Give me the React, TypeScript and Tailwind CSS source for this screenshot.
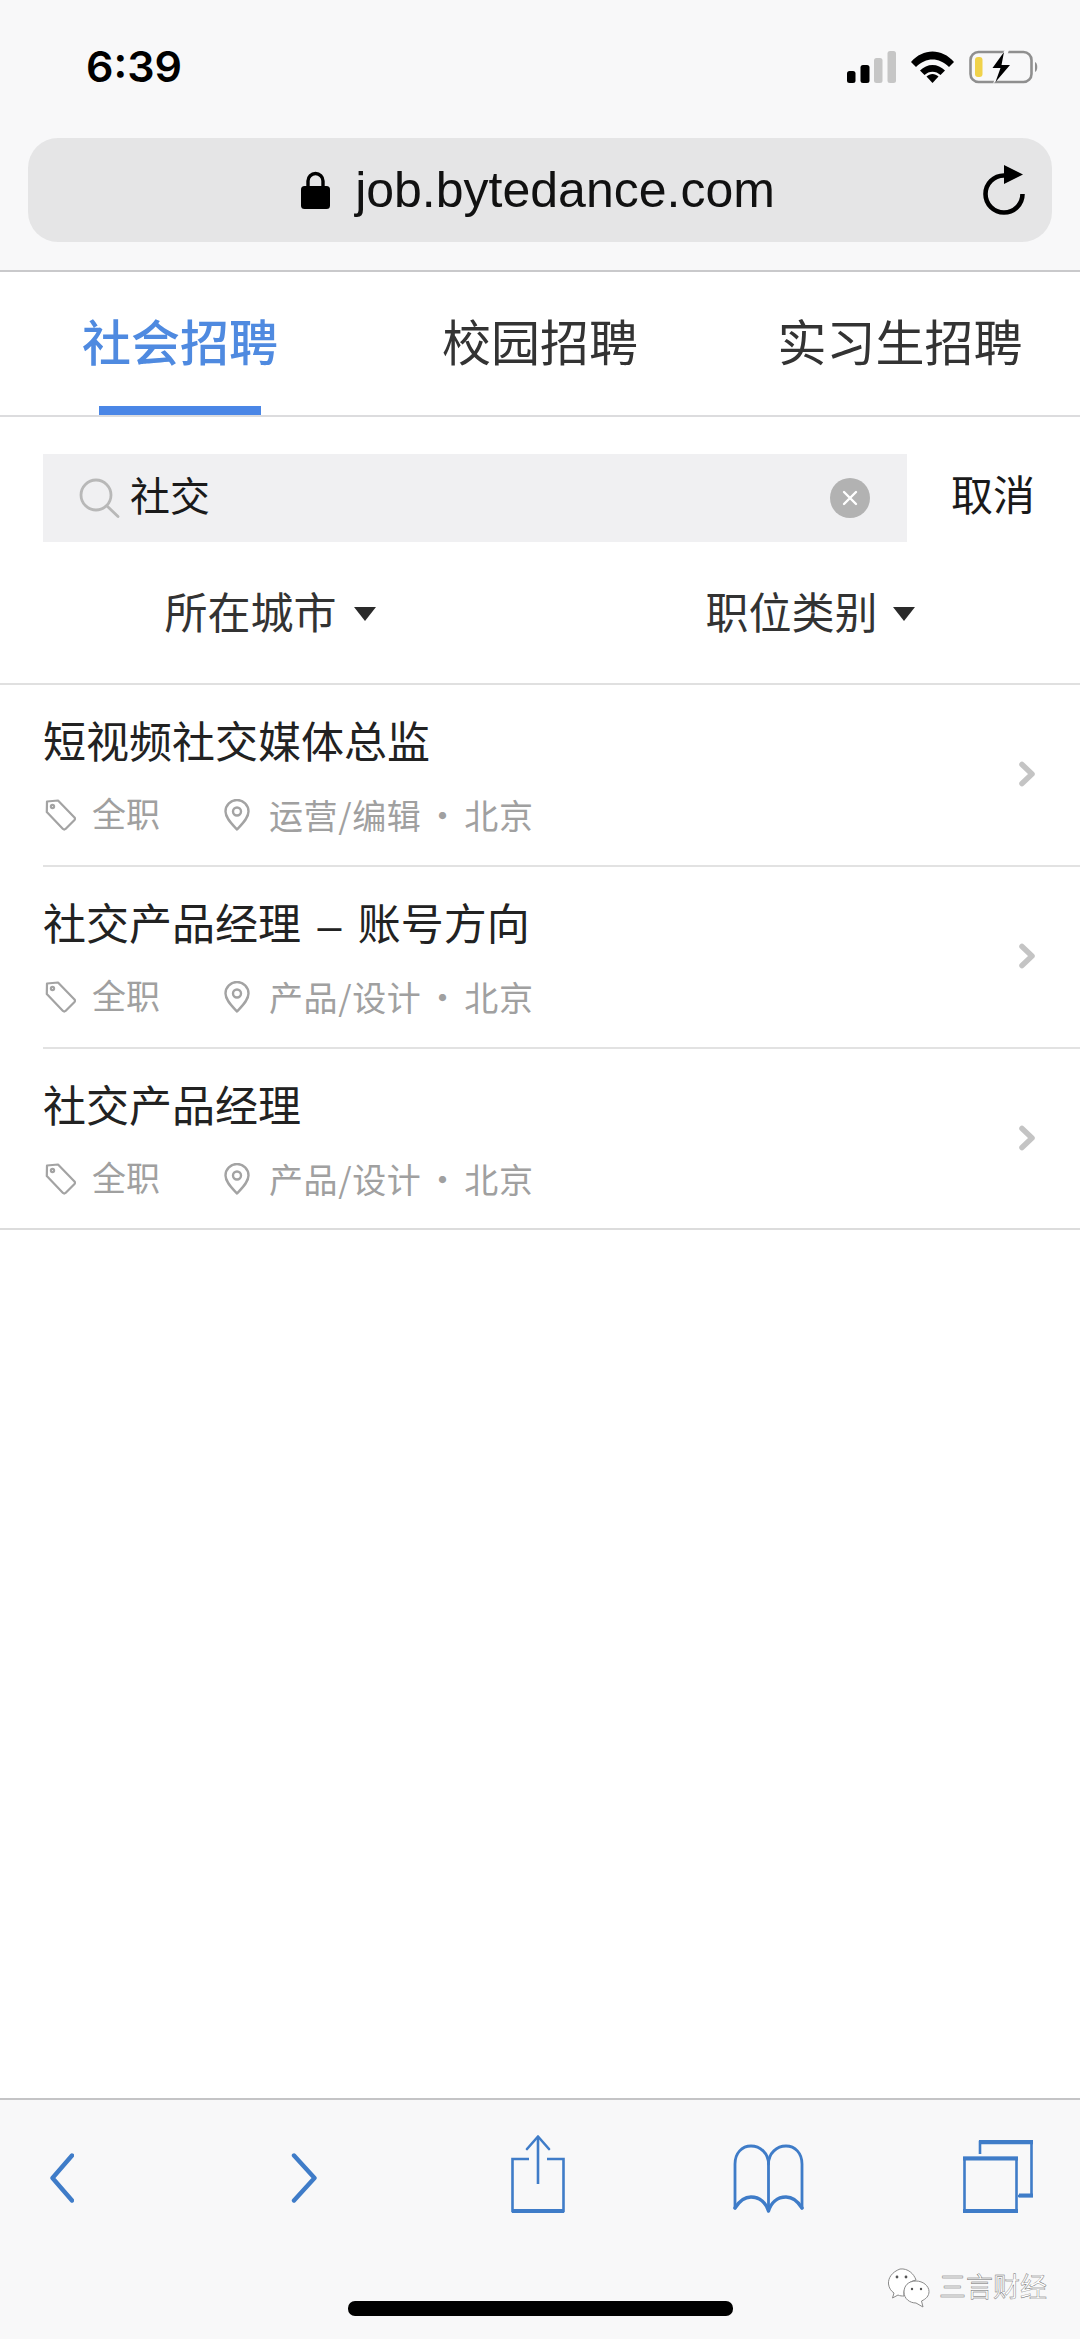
import React from "react";

const BLUE = "#3f7cc8";

function TagIcon() {
  return (
    <svg width="31" height="32" viewBox="0 0 31 32" fill="none" stroke="#a3a3a3" strokeWidth="2.2" strokeLinejoin="round">
      <path d="M2 2.5 L13 1.5 L29.5 18.5 Q30.5 19.8 29.5 21 L20.5 30 Q19.2 31 18 30 L1.8 13 Z" />
      <circle cx="7.5" cy="7.5" r="1.6" />
    </svg>
  );
}

function PinIcon() {
  return (
    <svg width="26" height="32" viewBox="0 0 26 32" fill="none" stroke="#a3a3a3" strokeWidth="2.4">
      <path d="M13 30.5 C8 25 1.5 19 1.5 12.5 A11.5 11.5 0 0 1 24.5 12.5 C24.5 19 18 25 13 30.5 Z" strokeLinejoin="round" />
      <circle cx="13" cy="12.5" r="4" />
    </svg>
  );
}

function Chevron() {
  return (
    <svg width="18" height="26" viewBox="0 0 18 26" fill="none" stroke="#c4c4c4" strokeWidth="5.5" strokeLinecap="round" strokeLinejoin="round">
      <path d="M4 3.5 L14 13 L4 22.5" />
    </svg>
  );
}

function Caret() {
  return (
    <svg width="22" height="14" viewBox="0 0 22 14" fill="#2a2a2a">
      <path d="M0 0 H22 L11 14 Z" />
    </svg>
  );
}

function JobRow({ title, cat, last }: { title: string; cat: string; last?: boolean }) {
  return (
    <div className={last ? "h-[181px] pl-[43px] flex items-center border-b-2 border-[#dcdcdc]" : "h-[182px] ml-[43px] flex items-center border-b-2 border-[#e2e2e2]"}>
      <div className="flex-1 self-start pt-[33px]">
        <div className="text-[43px] leading-[50px] text-[#222222] whitespace-pre [word-spacing:4.5px]">{title}</div>
        <div className="mt-[27px] h-[40px] flex items-center text-[34px] leading-[40px] text-[#a0a0a0]">
          <div className="ml-[2px]"><TagIcon /></div>
          <span className="ml-[16px] w-[68px]">全职</span>
          <div className="ml-[64px]"><PinIcon /></div>
          <span className="ml-[19px] -mt-[1px] whitespace-pre tracking-[0.6px] [word-spacing:-4px] [font-family:'Noto_Sans_CJK_SC',sans-serif]">{cat}</span>
        </div>
      </div>
      <div className="mr-[44px] mb-[2px]"><Chevron /></div>
    </div>
  );
}

export default function App() {
  return (
    <div className="relative w-[1080px] h-[2339px] flex flex-col bg-white overflow-hidden [font-family:'Liberation_Sans','Noto_Sans_CJK_SC',sans-serif]">
      {/* Browser chrome */}
      <div className="h-[272px] bg-[#f8f8f9] border-b-2 border-[#c9c9cb]">
        <div className="h-[138px] flex items-start pt-[38px] pl-[86px] pr-[41px]">
          <span className="text-[43px] leading-[56px] font-semibold text-black [font-family:Inter,sans-serif]">6:39</span>
          <div className="ml-auto flex items-center pt-[12px] gap-[15px]">
            <svg width="49" height="32" viewBox="0 0 49 32">
              <rect x="0" y="20" width="8.5" height="12" rx="2.5" fill="#000" />
              <rect x="13.5" y="14" width="9" height="18" rx="2.5" fill="#000" />
              <rect x="27" y="7" width="8.5" height="25" rx="2.5" fill="#c6c6c6" />
              <rect x="40.5" y="0" width="8.5" height="32" rx="2.5" fill="#c6c6c6" />
            </svg>
            <svg width="43" height="32" viewBox="0 0 43 32">
              <path d="M0 11 C12 -3 31 -3 43 11 L38 16 C28 6 15 6 5 16 Z" fill="#000" />
              <path d="M9 19.5 C16 12 27 12 34 19.5 L29.5 24 C25 19.5 18 19.5 13.5 24 Z" fill="#000" />
              <path d="M15.5 25.5 C19 22 24 22 27.5 25.5 L21.5 32 Z" fill="#000" />
            </svg>
            <svg width="70" height="34" viewBox="0 0 70 34">
              <rect x="1.5" y="2" width="61" height="30" rx="8" fill="none" stroke="#8f8f8f" strokeWidth="2.6" />
              <path d="M66 12 C69 13 69 21 66 22 Z" fill="#8f8f8f" />
              <rect x="6" y="7" width="7.5" height="20" rx="3" fill="#f0d24a" />
              <path d="M36 0 L21 19 H29 L24 34 L44 14 H35 L40 0 Z" fill="#f8f8f9" />
              <path d="M35 2 L23.5 18 H31.5 L26.5 32 L41 15 H32.5 Z" fill="#000" />
            </svg>
          </div>
        </div>
        <div className="relative mx-[28px] h-[104px] rounded-[30px] bg-[#e5e5e6] flex items-center justify-center">
          <div className="flex items-center gap-[25px] mr-[4px]">
            <svg width="29" height="38" viewBox="0 0 29 38">
              <path d="M7 18 V10 A7.5 7.5 0 0 1 22 10 V18" fill="none" stroke="#000" strokeWidth="3.4" />
              <rect x="0" y="15" width="29" height="23" rx="3.5" fill="#000" />
            </svg>
            <span className="text-[50px] leading-[60px] text-[#111111] [font-family:'Liberation_Sans',sans-serif]">job.bytedance.com</span>
          </div>
          <svg className="absolute right-[26px] top-[27px]" width="43" height="50" viewBox="0 0 43 50">
            <path d="M39.5 29 A18.5 18.5 0 1 1 21 10.5" fill="none" stroke="#000" strokeWidth="4.6" />
            <path d="M21 0 L40 9.5 L21 19 Z" fill="#000" />
          </svg>
        </div>
      </div>

      {/* Tabs */}
      <div className="h-[145px] grid grid-cols-3 border-b-2 border-[#dcdcde] text-[49px] leading-[60px] text-[#333333]">
        <div className="flex flex-col items-center pt-[42px]">
          <span className="text-[#4f8ae0] font-medium">社会招聘</span>
          <div className="mt-auto w-[162px] h-[9px] bg-[#4a86e6]" />
        </div>
        <div className="flex flex-col items-center pt-[42px]">校园招聘</div>
        <div className="flex flex-col items-center pt-[42px]">实习生招聘</div>
      </div>

      {/* Search */}
      <div className="pt-[37px] pl-[43px] flex items-center">
        <div className="w-[864px] h-[88px] bg-[#f0f0f2] flex items-center pl-[36px] pr-[37px]">
          <svg width="41" height="40" viewBox="0 0 41 40" fill="none" stroke="#b8b8b8" strokeWidth="2.8" strokeLinecap="round">
            <circle cx="17" cy="17" r="15" />
            <path d="M28 28 L39 38.5" />
          </svg>
          <span className="ml-[10px] -mt-[2px] text-[40px] leading-[50px] text-[#1a1a1a]">社交</span>
          <div className="ml-auto w-[40px] h-[40px] rounded-full bg-[#b2b2b2] flex items-center justify-center">
            <svg width="18" height="18" viewBox="0 0 18 18" stroke="#ffffff" strokeWidth="2.4" strokeLinecap="round">
              <path d="M3 3 L15 15 M15 3 L3 15" />
            </svg>
          </div>
        </div>
        <span className="ml-[44px] -mt-[2px] text-[42px] leading-[50px] text-[#1a1a1a]">取消</span>
      </div>

      {/* Filters */}
      <div className="h-[143px] pt-[2px] grid grid-cols-2 border-b-2 border-[#e0e0e0] text-[43px] leading-[50px] text-[#333333]">
        <div className="flex items-center justify-center gap-[17px]"><span>所在城市</span><Caret /></div>
        <div className="flex items-center justify-center gap-[15px]"><span>职位类别</span><Caret /></div>
      </div>

      {/* Results */}
      <JobRow title="短视频社交媒体总监" cat="运营/编辑 · 北京" />
      <JobRow title="社交产品经理 – 账号方向" cat="产品/设计 · 北京" />
      <JobRow title="社交产品经理" cat="产品/设计 · 北京" last />

      <div className="flex-1" />

      {/* Bottom bar */}
      <div className="h-[241px] bg-[#f8f8f9] border-t-2 border-[#c4c4c6] flex flex-col items-center">
        <div className="w-full flex items-start pl-[50px] pt-[35px]">
          <svg className="mt-[18px]" width="24" height="50" viewBox="0 0 24 50" fill="none" stroke={BLUE} strokeWidth="4.4" strokeLinecap="round" strokeLinejoin="round">
            <path d="M22 2.5 L2.5 25 L22 47.5" />
          </svg>
          <svg className="mt-[18px] ml-[217px]" width="26" height="50" viewBox="0 0 26 50" fill="none" stroke={BLUE} strokeWidth="4.4" strokeLinecap="round" strokeLinejoin="round">
            <path d="M3 2.5 L23.5 25 L3 47.5" />
          </svg>
          <svg className="ml-[194px]" width="54" height="78" viewBox="0 0 54 78" fill="none" stroke={BLUE} strokeWidth="2.6">
            <path d="M18 24 H1.5 V76 H52.5 V24 H36" />
            <path d="M1 76 H53" strokeWidth="4" />
            <path d="M27 2 V49" />
            <path d="M16 14 L27 1.5 L38 14" strokeLinecap="round" strokeLinejoin="round" />
          </svg>
          <svg className="ml-[168px] mt-[9px]" width="71" height="69" viewBox="0 0 71 69" fill="none" stroke={BLUE} strokeWidth="2.8" strokeLinecap="round" strokeLinejoin="round">
            <path d="M2 64 V20 C2 9 9 2 18 2 C27 2 35.5 9 35.5 20 V67" />
            <path d="M69 64 V20 C69 9 62 2 53 2 C44 2 35.5 9 35.5 20" />
            <path d="M2 64 C7 56 12 53 18 53 C27 53 33 59 35.5 67 C38 59 44 53 53 53 C59 53 64 56 69 64" strokeWidth="3.4" />
          </svg>
          <svg className="ml-[159px] mt-[5px]" width="70" height="73" viewBox="0 0 70 73" fill="none" stroke={BLUE} strokeWidth="2.6">
            <path d="M17 14 V2 H68.5 V56 H55" />
            <path d="M16 2 H70" strokeWidth="4.4" />
            <path d="M56 55.5 H70" strokeWidth="4" />
            <rect x="1.5" y="18" width="52" height="53" />
            <path d="M0 18.5 H55 M0 71 H55" strokeWidth="4" />
          </svg>
        </div>
        <div className="mt-auto mb-[23px] w-[385px] h-[15px] rounded-[7px] bg-black" />
      </div>

      {/* Watermark */}
      <div className="absolute left-[887px] top-[2268px] flex items-center gap-[8px]">
        <svg width="44" height="40" viewBox="0 0 44 40" fill="#ffffff" stroke="#8a8a8a" strokeWidth="1">
          <path d="M13 1 C5 4 1 10 1.5 16 C2 20 4 23 7 25 L5.5 30 L11 27 C13 28 15 28 17 28 C16 22 19 14 29 12 C27 6 21 0 13 1 Z" />
          <path d="M29 13 C21 13 17 18 17 24 C17 31 23 35 29 35 L36 39 L34.5 33 C39 31 42 28 42 23.5 C42 18 36 13 29 13 Z" />
          <circle cx="10" cy="9" r="1.4" fill="#555" stroke="none" />
          <circle cx="19" cy="9" r="1.4" fill="#555" stroke="none" />
          <circle cx="25" cy="21" r="1.2" fill="#555" stroke="none" />
          <circle cx="34" cy="21" r="1.2" fill="#555" stroke="none" />
        </svg>
        <span className="text-[27px] leading-[34px] text-white [-webkit-text-stroke:0.4px_#666666]">三言财经</span>
      </div>
    </div>
  );
}
